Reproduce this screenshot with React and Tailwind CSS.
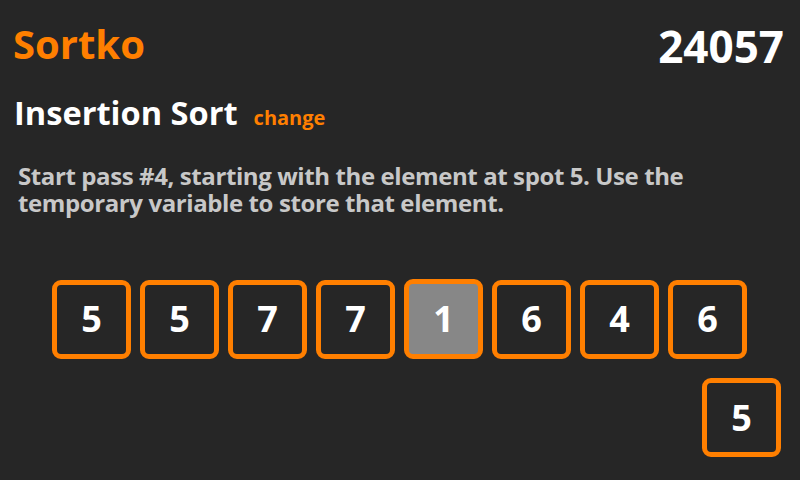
export default function App() {
  const items = [5, 5, 7, 7, 1, 6, 4, 6];
  return (
    <div className="w-[800px] h-[480px] bg-[#262626] overflow-hidden font-['Open_Sans',sans-serif] font-bold">
      <div className="flex justify-between items-start pl-[13px] pr-[16px] pt-[16px] h-[76px]">
        <div className="text-[40px] leading-[56px] text-[#ff7f00]">Sortko</div>
        <div className="text-[44px] leading-[60px] text-white">24057</div>
      </div>
      <div className="flex items-baseline pl-[14px] mt-[17px] h-[40px]">
        <div className="text-[32.6px] leading-[40px] text-white">Insertion Sort</div>
        <div className="ml-[16px] text-[20px] leading-[28px] text-[#ff7f00]">change</div>
      </div>
      <div className="pl-[18px] mt-[29px] text-[24px] leading-[27px] text-[#c8c8c8] tracking-[-0.4px] w-[710px]">
        Start pass #4, starting with the element at spot 5. Use the temporary variable to store that element.
      </div>
      <div className="flex items-center gap-[9px] pl-[52px] mt-[63px]">
        {items.map((n, i) => (
          <div
            key={i}
            className={
              "border-[5px] border-[#ff7f00] rounded-[9px] flex items-center justify-center text-[36px] leading-none text-white " +
              (i === 4 ? "w-[79px] h-[80px] bg-[#878787]" : "w-[79px] h-[79px] bg-[#262626]")
            }
          >
            {n}
          </div>
        ))}
      </div>
      <div className="flex justify-end pr-[19px] mt-[19px]">
        <div className="w-[79px] h-[79px] border-[5px] border-[#ff7f00] rounded-[9px] flex items-center justify-center text-[36px] leading-none text-white">
          5
        </div>
      </div>
    </div>
  );
}
